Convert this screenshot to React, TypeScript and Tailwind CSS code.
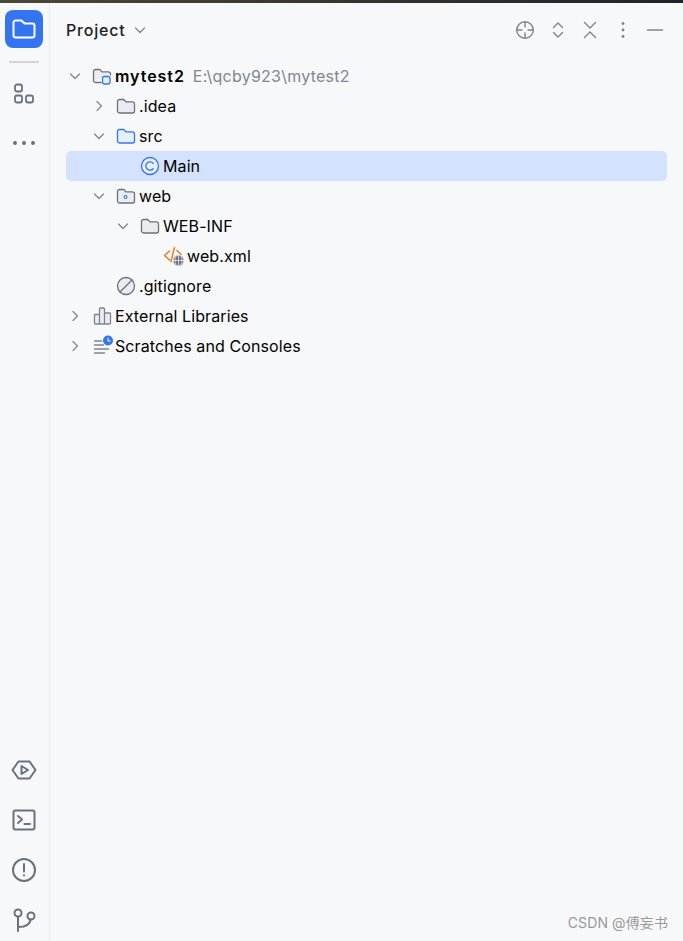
import type { ReactNode } from "react";

const G = "#6c707e";
const H = "#7f8390";
const B = "#3574f0";
const FOLDER = "M2.5 6.5a2 2 0 0 1 2-2h4.2l2.3 2.4h6.5a2 2 0 0 1 2 2v7.1a2 2 0 0 1-2 2h-13a2 2 0 0 1-2-2z";

function Icon({ children }: { children: ReactNode }) {
  return (
    <svg width="22" height="22" viewBox="0 0 22 22" fill="none" strokeWidth="1.3" strokeLinecap="round" strokeLinejoin="round" className="shrink-0">
      {children}
    </svg>
  );
}

function Folder({ blue, dot }: { blue?: boolean; dot?: boolean }) {
  return (
    <Icon>
      <path d={FOLDER} fill={blue ? "#e7effd" : "#ebecf0"} stroke={blue ? B : G} />
      {dot && <circle cx="10.5" cy="12" r="1.5" stroke={B} strokeWidth="1.1" />}
    </Icon>
  );
}

function Chevron({ open }: { open?: boolean }) {
  return (
    <svg width="16" height="16" viewBox="0 0 16 16" fill="none" stroke={H} strokeWidth="1.2" strokeLinecap="round" strokeLinejoin="round">
      <path d={open ? "M3.5 6l4.5 4.500L12.500 6" : "M6 3.500l4.500 4.500L6 12.500"} />
    </svg>
  );
}

function Row({ depth, open, icon, selected, children }: { depth: string; open?: boolean; icon: ReactNode; selected?: boolean; children: ReactNode }) {
  return (
    <li className={`flex h-[30px] items-center rounded-[5px] ${depth} ${selected ? "bg-[#d4e2ff]" : ""}`}>
      <span className="ml-[1px] flex w-4 shrink-0 justify-center">{open !== undefined && <Chevron open={open} />}</span>
      <span className="ml-[8px] flex w-[22px] shrink-0 items-center justify-center">{icon}</span>
      <span className="ml-[2px] flex items-baseline whitespace-nowrap text-[16px] tracking-[0.1px] text-black">{children}</span>
    </li>
  );
}

function RailIcon({ children }: { children: ReactNode }) {
  return (
    <svg width="26" height="26" viewBox="0 0 26 26" fill="none" stroke={G} strokeWidth="2" strokeLinecap="round" strokeLinejoin="round">
      {children}
    </svg>
  );
}

export default function App() {
  return (
    <div className="relative flex h-[941px] w-[683px] flex-col overflow-hidden bg-[#f7f8fa] font-['Inter','Noto_Sans_CJK_SC',sans-serif]">
      <div className="h-[3px] shrink-0 bg-gradient-to-r from-[#4d4734] to-[#22232a]" />
      <div className="flex min-h-0 flex-1">
        {/* left rail */}
        <aside className="flex w-[50px] shrink-0 flex-col items-center justify-between border-r border-[#ebecf0] pb-[8px] pr-[1px] pt-[7px]">
          <div className="flex flex-col items-center">
            <div className="flex h-[38px] w-[38px] items-center justify-center rounded-[8px] bg-[#3574f0]">
              <svg width="26" height="26" viewBox="0 0 26 26" fill="none" stroke="#fff" strokeWidth="2" strokeLinejoin="round">
                <path d="M2.5 6.5a2 2 0 0 1 2-2h6l3 3h8a2 2 0 0 1 2 2v10a2 2 0 0 1-2 2h-17a2 2 0 0 1-2-2z" />
              </svg>
            </div>
            <div className="mt-[13px] h-[2px] w-[30px] bg-[#d3d5db]" />
            <div className="mt-[19px]">
              <svg width="24" height="24" viewBox="0 0 24 24" fill="none" stroke={G} strokeWidth="1.8">
                <rect x="3" y="2.5" width="7" height="7" rx="2" />
                <rect x="3" y="13.5" width="7" height="7" rx="2" />
                <rect x="14" y="13.5" width="7" height="7" rx="2" />
              </svg>
            </div>
            <div className="mt-[35px] flex gap-[5.500px]">
              <span className="h-[3.500px] w-[3.500px] rounded-full bg-[#6c707e]" />
              <span className="h-[3.500px] w-[3.500px] rounded-full bg-[#6c707e]" />
              <span className="h-[3.500px] w-[3.500px] rounded-full bg-[#6c707e]" />
            </div>
          </div>
          <div className="flex flex-col items-center gap-[24px]">
            <RailIcon>
              <path d="M7.5 4.5h11L24.5 13l-6 8.5h-11L1.5 13z" />
              <path d="M10.5 9v8l6.5-4z" />
            </RailIcon>
            <RailIcon>
              <rect x="2.5" y="3.5" width="21" height="19" rx="2" />
              <path d="M7 9l4 3.5L7 16M13.5 17h5.5" />
            </RailIcon>
            <RailIcon>
              <circle cx="13" cy="13" r="11" />
              <path d="M13 7v7.5M13 18.200v.3" />
            </RailIcon>
            <RailIcon>
              <circle cx="7" cy="6" r="3.5" />
              <circle cx="20" cy="9" r="3.5" />
              <path d="M7 10v14M7 20c7 0 12-2 12.500-7.500" />
            </RailIcon>
          </div>
        </aside>

        {/* project panel */}
        <main className="flex min-w-0 flex-1 flex-col pl-[16px] pr-[16px]">
          <header className="flex h-[58px] shrink-0 items-center justify-between pb-[4px]">
            <div className="flex items-center gap-[7px]">
              <span className="text-[16px] font-medium tracking-[0.8px] text-[#1e1f22]">Project</span>
              <svg width="14" height="14" viewBox="0 0 14 14" fill="none" stroke={H} strokeWidth="1.2" strokeLinecap="round" strokeLinejoin="round">
                <path d="M2.500 5l4.500 4.500L11.500 5" />
              </svg>
            </div>
            <div className="mr-[2px] flex items-center gap-[12.500px]">
              <svg width="20" height="20" viewBox="0 0 20 20" fill="none" stroke={H} strokeWidth="1.4" strokeLinecap="round">
                <circle cx="10" cy="10" r="8.300" />
                <path d="M10 2v5M10 13v5M2 10h5M13 10h5" />
              </svg>
              <svg width="20" height="20" viewBox="0 0 20 20" fill="none" stroke={H} strokeWidth="1.4" strokeLinecap="round" strokeLinejoin="round">
                <path d="M5.500 7.500L10 3l4.500 4.500M5.500 12.500L10 17l4.500-4.500" />
              </svg>
              <svg width="20" height="20" viewBox="0 0 20 20" fill="none" stroke={H} strokeWidth="1.4" strokeLinecap="round" strokeLinejoin="round">
                <path d="M4.500 2.500L10 8l5.500-5.500M4.500 17.500L10 12l5.500 5.500" />
              </svg>
              <svg width="20" height="20" viewBox="0 0 20 20" fill={H}>
                <circle cx="10" cy="3.500" r="1.400" />
                <circle cx="10" cy="10" r="1.400" />
                <circle cx="10" cy="16.500" r="1.400" />
              </svg>
              <svg width="20" height="20" viewBox="0 0 20 20" fill="none" stroke={H} strokeWidth="1.5" strokeLinecap="round">
                <path d="M2.500 10h15" />
              </svg>
            </div>
          </header>

          <ul className="flex flex-col">
            <Row
              depth="pl-0"
              open
              icon={
                <Icon>
                  <path d="M2.500 15.500v-9a2 2 0 0 1 2-2h4.200l2.300 2.400h6.500a2 2 0 0 1 2 2v1M10 17.500H4.500a2 2 0 0 1-2-2" fill="#ebecf0" stroke={G} />
                  <rect x="11.500" y="11.500" width="7.500" height="7.500" rx="2" fill="#e7effd" stroke={B} />
                </Icon>
              }
            >
              <span className="font-semibold tracking-[0.95px]">mytest2</span>
              <span className="ml-[8px] tracking-[0.24px] text-[#818594]">E:\qcby923\mytest2</span>
            </Row>
            <Row depth="pl-[24px]" open={false} icon={<Folder />}>.idea</Row>
            <Row depth="pl-[24px]" open icon={<Folder blue />}>src</Row>
            <Row
              depth="pl-[48px]"
              selected
              icon={
                <Icon>
                  <circle cx="11" cy="11" r="8.500" fill="#e7effd" stroke={B} />
                  <path d="M14.200 8.200a4.200 4.200 0 1 0 0 5.600" stroke={B} />
                </Icon>
              }
            >
              Main
            </Row>
            <Row depth="pl-[24px]" open icon={<Folder dot />}>web</Row>
            <Row depth="pl-[48px]" open icon={<Folder />}>WEB-INF</Row>
            <Row
              depth="pl-[72px]"
              icon={
                <Icon>
                  <path d="M6.500 6L1.500 10.500 6.500 15M11.500 2.500L8 16.500M14 5.500l4 4" stroke="#ee7a22" strokeWidth="1.5" />
                  <circle cx="15.500" cy="15.500" r="5.500" fill="#6c707e" stroke="#f7f8fa" strokeWidth="0.8" />
                  <path d="M10.500 15.500h10M15.500 10.500v10M13 11.500c-1.500 2.500-1.500 5.500 0 8M18 11.500c1.500 2.500 1.500 5.500 0 8" stroke="#f7f8fa" strokeWidth="0.7" />
                </Icon>
              }
            >
              web.xml
            </Row>
            <Row
              depth="pl-[24px]"
              icon={
                <Icon>
                  <circle cx="11" cy="11" r="8.500" fill="#ebecf0" stroke={G} />
                  <path d="M5 17L17 5" stroke={G} />
                </Icon>
              }
            >
              .gitignore
            </Row>
            <Row
              depth="pl-0"
              open={false}
              icon={
                <Icon>
                  <path d="M3.500 9.500h5V19H4.500a1 1 0 0 1-1-1zM8.500 4a1 1 0 0 1 1-1h3a1 1 0 0 1 1 1v15h-5zM13.500 8H18.500a1 1 0 0 1 1 1v9a1 1 0 0 1-1 1h-5z" fill="#ebecf0" stroke={H} />
                </Icon>
              }
            >
              External Libraries
            </Row>
            <Row
              depth="pl-0"
              open={false}
              icon={
                <Icon>
                  <path d="M3.500 6h7M3.500 10h9M3.500 14h14M3.500 18h10" stroke={H} strokeWidth="1.500" />
                  <circle cx="17" cy="5.500" r="5" fill={B} />
                  <path d="M17 3v3h2.200" stroke="#fff" strokeWidth="1" />
                </Icon>
              }
            >
              Scratches and Consoles
            </Row>
          </ul>
        </main>
      </div>
      <span className="absolute bottom-[8px] right-[15px] text-[14px] tracking-[0.1px] text-[#9a9a9a]">CSDN @傅妄书</span>
    </div>
  );
}
